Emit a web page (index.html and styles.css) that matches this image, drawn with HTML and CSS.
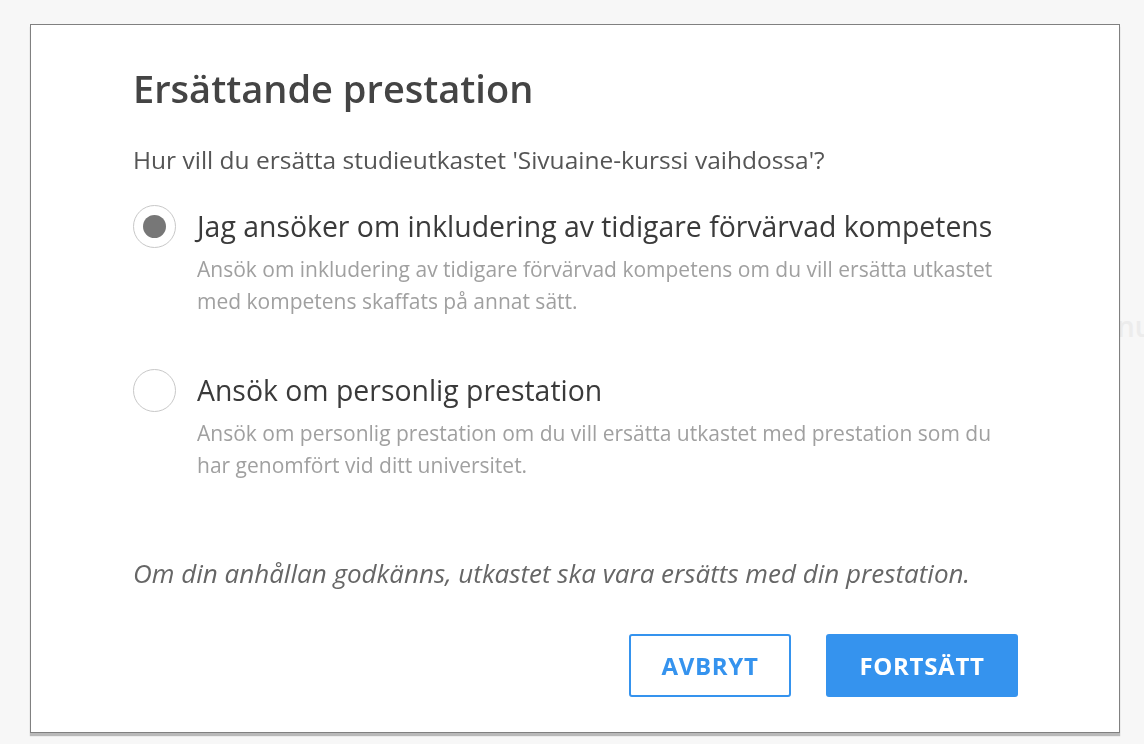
FILE: index.html
```html
<!DOCTYPE html>
<html lang="sv">
<head>
<meta charset="utf-8">
<title>Ersättande prestation</title>
<link rel="stylesheet" href="styles.css">
</head>
<body>
<div class="page">
  <div class="page-row"><span class="ghost-text">nu</span></div>
</div>
<div class="modal" role="dialog">
  <h1 class="modal-title">Ersättande prestation</h1>
  <p class="question">Hur vill du ersätta studieutkastet 'Sivuaine-kurssi vaihdossa'?</p>
  <div class="options">
    <label class="option">
      <span class="radio radio-checked"><span class="radio-dot"></span></span>
      <span class="option-text">
        <span class="option-label">Jag ansöker om inkludering av tidigare förvärvad kompetens</span>
        <span class="option-desc">Ansök om inkludering av tidigare förvärvad kompetens om du vill ersätta utkastet med kompetens skaffats på annat sätt.</span>
      </span>
    </label>
    <label class="option">
      <span class="radio"></span>
      <span class="option-text">
        <span class="option-label">Ansök om personlig prestation</span>
        <span class="option-desc">Ansök om personlig prestation om du vill ersätta utkastet med prestation som du har genomfört vid ditt universitet.</span>
      </span>
    </label>
  </div>
  <p class="note">Om din anhållan godkänns, utkastet ska vara ersätts med din prestation.</p>
  <div class="actions">
    <button class="btn btn-outline">AVBRYT</button>
    <button class="btn btn-primary">FORTSÄTT</button>
  </div>
</div>
</body>
</html>
```

FILE: styles.css
```css
html, body {
  margin: 0;
  padding: 0;
  height: 100%;
}
body {
  background: #f7f7f7;
  font-family: "Open Sans", "Noto Sans", sans-serif;
  overflow: hidden;
}
.page {
  height: 744px;
}
.page-row {
  padding-top: 306px;
  padding-left: 1117px;
  white-space: nowrap;
}
.ghost-text {
  font-size: 28px;
  line-height: 40px;
  color: #ececec;
  font-weight: 600;
}
.modal {
  position: fixed;
  left: 30px;
  top: 24px;
  width: 1090px;
  height: 709px;
  box-sizing: border-box;
  background: #ffffff;
  border: 1px solid #808080;
  box-shadow: 0 3px 1px rgba(0, 0, 0, 0.25);
  padding: 0 0 0 102px;
  display: flex;
  flex-direction: column;
}
.modal-title {
  margin: 39px 0 0 0;
  font-size: 38px;
  line-height: 48px;
  font-weight: 600;
  color: #444444;
}
.question {
  margin: 32px 0 0 0;
  font-size: 24.5px;
  line-height: 32px;
  color: #555555;
}
.options {
  margin-top: 30px;
  display: flex;
  flex-direction: column;
  gap: 53px;
}
.option {
  display: flex;
  gap: 21px;
  align-items: flex-start;
}
.radio {
  flex: none;
  width: 43px;
  height: 43px;
  margin-top: -1px;
  border-radius: 50%;
  border: 1px solid #c8c8c8;
  box-sizing: border-box;
  display: flex;
  align-items: center;
  justify-content: center;
  background: #ffffff;
}
.radio-dot {
  width: 23px;
  height: 23px;
  border-radius: 50%;
  background: #777777;
}
.option-text {
  display: flex;
  flex-direction: column;
}
.option-label {
  font-size: 28.4px;
  line-height: 40px;
  color: #3a3a3a;
}
.option-desc {
  margin-top: 7px;
  font-size: 21px;
  line-height: 32px;
  color: #a0a0a0;
  max-width: 815px;
}
.note {
  margin: 74px 0 0 0;
  font-size: 26px;
  line-height: 36px;
  font-style: italic;
  color: #666666;
}
.actions {
  margin-top: 43px;
  padding-right: 101px;
  display: flex;
  justify-content: flex-end;
  gap: 35px;
}
.btn {
  height: 63px;
  padding: 0;
  border-radius: 3px;
  font-family: "Open Sans", "Noto Sans", sans-serif;
  font-size: 24px;
  font-weight: 700;
  letter-spacing: 0.7px;
  cursor: pointer;
  box-sizing: border-box;
}
.btn-outline {
  width: 162px;
  background: #ffffff;
  color: #3593ee;
  border: 2px solid #3593ee;
}
.btn-primary {
  width: 192px;
  background: #3593ee;
  color: #ffffff;
  border: none;
}
```
